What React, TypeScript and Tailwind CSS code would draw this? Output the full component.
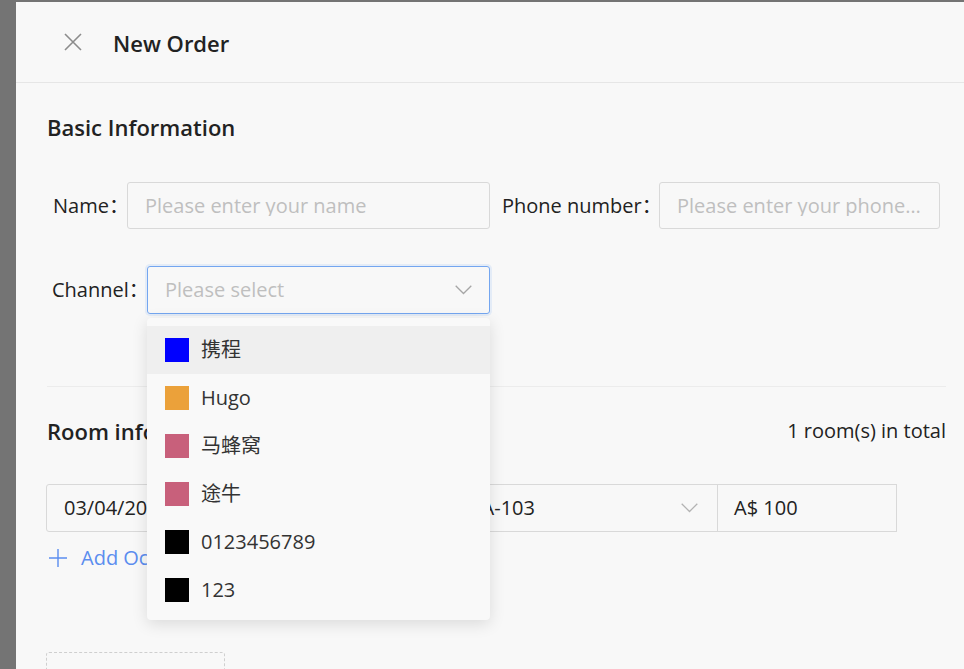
const channels = [
  { name: "携程", color: "bg-[#0000ff]" },
  { name: "Hugo", color: "bg-[#eba13a]" },
  { name: "马蜂窝", color: "bg-[#c8607b]" },
  { name: "途牛", color: "bg-[#c8607b]" },
  { name: "0123456789", color: "bg-black" },
  { name: "123", color: "bg-black" },
];

function Chevron({ className }: { className?: string }) {
  return (
    <svg className={className} width="17" height="10" viewBox="0 0 17 10" fill="none">
      <path d="M0.7 0.7 8.5 8.5 16.3 0.7" stroke="currentColor" strokeWidth="1.3" />
    </svg>
  );
}

function Field({
  label,
  placeholder,
  labelClass,
}: {
  label: string;
  placeholder: string;
  labelClass: string;
}) {
  return (
    <div className="flex items-center">
      <span className={`shrink-0 whitespace-nowrap text-[#222] ${labelClass}`}>{label}</span>
      <div className="flex h-[47px] min-w-0 flex-1 items-center rounded-[3px] border border-[#d9d9d9] px-[17px]">
        <span className="truncate text-[#bfbfbf]">{placeholder}</span>
      </div>
    </div>
  );
}

export default function App() {
  return (
    <div
      className="relative h-[669px] w-[964px] overflow-hidden bg-[#747474] pl-[16px] pt-[2px] text-[20px] leading-none"
      style={{ fontFamily: '"Open Sans", "Noto Sans CJK SC", sans-serif' }}
    >
      <div className="h-full bg-[#f8f8f8]">
        {/* header */}
        <div className="flex h-[81px] items-center border-b border-[#e6e6e6] pl-[48px]">
          <button className="text-[#8c8c8c]">
            <svg width="18" height="18" viewBox="0 0 18 18" fill="none">
              <path d="M1 1 17 17M17 1 1 17" stroke="currentColor" strokeWidth="1.6" />
            </svg>
          </button>
          <h2 className="ml-[31px] pt-[2px] text-[22px] font-semibold text-[#222]">New Order</h2>
        </div>

        <div className="pl-[31px] pr-[18px]">
          <h3 className="pt-[33px] text-[22px] font-semibold text-[#222]">Basic Information</h3>

          <div className="mt-[44px] grid w-[893px] grid-cols-[443px_438px] gap-x-[12px] gap-y-[37px]">
            <Field label="Name：" placeholder="Please enter your name" labelClass="w-[80px] pl-[6px]" />
            <Field label="Phone number：" placeholder="Please enter your phone number" labelClass="w-[157px]" />

            <div className="flex items-center">
              <span className="w-[100px] shrink-0 pl-[5px] text-[#222]">Channel：</span>
              <div className="relative flex-1">
                <div className="flex h-[48px] items-center justify-between rounded-[3px] border border-[#74a6f0] pl-[17px] pr-[17px] shadow-[0_0_0_2px_rgba(116,166,240,0.15)]">
                  <span className="text-[#bfbfbf]">Please select</span>
                  <Chevron className="text-[#a6a6a6]" />
                </div>

                {/* dropdown */}
                <div className="absolute left-0 right-0 top-[52px] z-10 rounded-[4px] bg-[#f9f9f9] pb-[6px] pt-[8px] shadow-[0_4px_16px_rgba(0,0,0,0.12)]">
                  {channels.map((c, i) => (
                    <div
                      key={c.name}
                      className={`flex h-[48px] items-center gap-[12px] px-[18px] text-[#333] ${i === 0 ? "bg-[#efefef]" : ""}`}
                    >
                      <span className={`h-[24px] w-[24px] shrink-0 ${c.color}`} />
                      <span>{c.name}</span>
                    </div>
                  ))}
                </div>
              </div>
            </div>
          </div>

          <div className="mt-[72px] border-t border-[#ececec]" />

          <div className="mt-[33px] flex items-center justify-between">
            <h3 className="text-[22px] font-semibold text-[#222]">Room information</h3>
            <span className="text-[#222]">1 room(s) in total</span>
          </div>

          <div className="ml-[-1px] mt-[42px] flex h-[48px] w-[851px]">
            <div className="flex w-[268px] items-center rounded-l-[3px] border border-[#d9d9d9] px-[17px] text-[#222]">
              03/04/2024
            </div>
            <div className="flex flex-1 items-center justify-between border-y border-[#d9d9d9] pl-[17px] pr-[19px] text-[#222]">
              <span>Standard Room A-103</span>
              <Chevron className="text-[#b3b3b3]" />
            </div>
            <div className="flex w-[180px] items-center border border-[#d9d9d9] px-[16px] text-[#222]">
              A$ 100
            </div>
          </div>

          <button className="ml-[2px] mt-[16px] flex items-center gap-[14px] text-[#5b8def]">
            <svg width="18" height="18" viewBox="0 0 18 18" fill="none">
              <path d="M9 0V18M0 9H18" stroke="currentColor" strokeWidth="1.4" />
            </svg>
            <span>Add Occupant</span>
          </button>

          <div className="ml-[-1px] mt-[84px] h-[60px] w-[179px] rounded-[3px] border border-dashed border-[#cfcfcf]" />
        </div>
      </div>
    </div>
  );
}
